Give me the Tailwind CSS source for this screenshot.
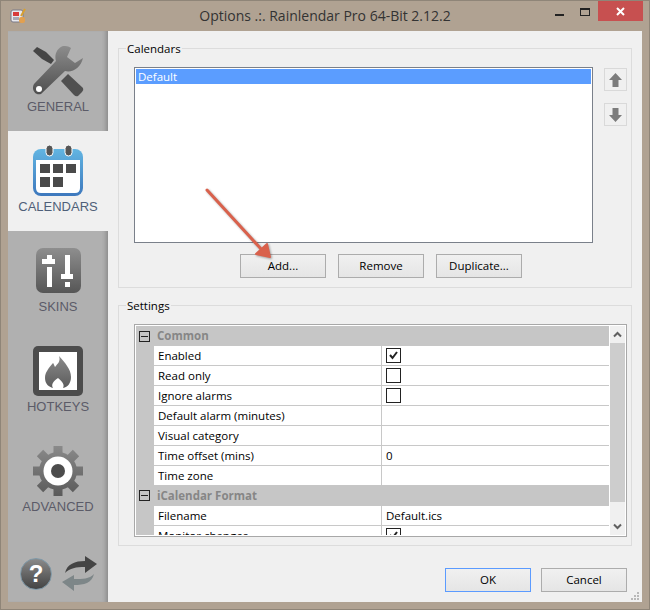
<!DOCTYPE html>
<html>
<head>
    <title>Options .:. Rainlendar Pro 64-Bit 2.12.2</title>
    <script src="https://cdn.jsdelivr.net/npm/@tailwindcss/browser@4"></script>
</head>
<body class="bg-[#b0a292]">
<div class="relative w-[650px] h-[610px] flex flex-col bg-[#b0a292] border border-[#8f8578] font-['Open_Sans',sans-serif] text-[11.5px] text-black overflow-hidden">

    <!-- title bar -->
    <div class="relative h-[30px] shrink-0 flex items-center justify-center text-[#333] text-[14px] pb-[1px]">
        <svg class="absolute left-[9px] top-[6px]" width="17" height="17" viewBox="0 0 17 17">
            <rect x="1" y="3" width="12" height="12" rx="2" fill="#e8e8ee" stroke="#7a7a88"/>
            <rect x="3" y="5" width="6" height="4" fill="#d83a3a"/>
            <rect x="3" y="10" width="6" height="3" fill="#a8a8b4"/>
            <rect x="9" y="10" width="6" height="6" rx="2" fill="#e2a050"/>
            <path d="M11 9 L15 2" stroke="#d8a030" stroke-width="2"/>
        </svg>
        <span>Options .:. Rainlendar Pro 64-Bit 2.12.2</span>
        <div class="absolute right-[85px] top-[13px] w-[9px] h-[2px] bg-[#222]"></div>
        <div class="absolute right-[59px] top-[7px] w-[10px] h-[8px] border border-t-2 border-[#222]"></div>
        <div class="absolute right-[6px] top-0 w-[45px] h-[20px] bg-[#c75050] flex items-center justify-center">
            <svg width="9" height="9" viewBox="0 0 9 9"><path d="M1 1 L8 8 M8 1 L1 8" stroke="#fff" stroke-width="2"/></svg>
        </div>
    </div>

    <div class="flex h-[571px] mx-[7px] bg-[#f0f0f0]">
        <!-- sidebar -->
        <div class="w-[100px] shrink-0 flex flex-col bg-[#b0b0b0] shadow-[inset_-5px_0_4px_-3px_rgba(0,0,0,0.22)] font-['Liberation_Sans',sans-serif] text-[13px] text-[#5b5b68]">
            <div class="h-[100px] flex flex-col items-center pt-[14px]">
                <svg width="52" height="52" viewBox="0 0 52 52">
                    <defs>
                        <linearGradient id="g1" x1="0" y1="0" x2="0" y2="1"><stop offset="0" stop-color="#8c8c8c"/><stop offset="1" stop-color="#4e4e4e"/></linearGradient>
                    </defs>
                    <path d="M1 6 L5 2 L14 7 L22 15 L19 19 L10 14 Z" fill="#454545"/>
                    <path d="M36 29 L51 43 Q52 45 50 47 L46 51 Q44 52 42 50 L29 36 Z" fill="#505050"/>
                    <path d="M31 1 C25 3 22 10 24 16 L2 39 C-1 44 3 51 9 49 L33 26 C41 28 49 22 51 13 L43 18 L35 12 L39 3 C36 1 34 1 31 1 Z" fill="url(#g1)"/>
                    <circle cx="7" cy="44" r="3" fill="#fff"/>
                </svg>
                <span class="mt-[2px] leading-[16px]">GENERAL</span>
            </div>
            <div class="h-[100px] flex flex-col items-center pt-[14px] bg-[#f0f0f0] text-[#4f5f78]">
                <svg width="52" height="52" viewBox="0 0 52 52">
                    <defs>
                        <linearGradient id="g2" x1="0" y1="0" x2="0" y2="1"><stop offset="0" stop-color="#62b5e2"/><stop offset="1" stop-color="#3d78bd"/></linearGradient>
                    </defs>
                    <rect x="1" y="4" width="50" height="47" rx="8" fill="url(#g2)"/>
                    <path d="M4 15 H48 V43 Q48 48 43 48 H9 Q4 48 4 43 Z" fill="#fff"/>
                    <rect x="14" y="0" width="7" height="11" rx="3.5" fill="#555" stroke="#fff"/>
                    <rect x="33" y="0" width="7" height="11" rx="3.5" fill="#555" stroke="#fff"/>
                    <g fill="#4a4a4a">
                        <rect x="8" y="19" width="10" height="9"/><rect x="21" y="19" width="10" height="9"/><rect x="34" y="19" width="10" height="9"/>
                        <rect x="8" y="32" width="10" height="10"/><rect x="21" y="32" width="10" height="10"/>
                    </g>
                </svg>
                <span class="mt-[2px] leading-[16px]">CALENDARS</span>
            </div>
            <div class="h-[100px] flex flex-col items-center pt-[14px]">
                <svg width="52" height="52" viewBox="0 0 52 52">
                    <defs>
                        <linearGradient id="g3" x1="0" y1="0" x2="0" y2="1"><stop offset="0" stop-color="#8e8e8e"/><stop offset="1" stop-color="#565656"/></linearGradient>
                    </defs>
                    <rect x="4" y="3" width="45" height="45" rx="7" fill="url(#g3)"/>
                    <g fill="#fff">
                        <rect x="15" y="10" width="5" height="4"/><rect x="10" y="14" width="13" height="5"/><rect x="15" y="22" width="5" height="20"/>
                        <rect x="33" y="10" width="5" height="19"/><rect x="29" y="29" width="12" height="5"/><rect x="33" y="37" width="5" height="5"/>
                    </g>
                </svg>
                <span class="mt-[2px] leading-[16px]">SKINS</span>
            </div>
            <div class="h-[100px] flex flex-col items-center pt-[14px]">
                <svg width="52" height="52" viewBox="0 0 52 52">
                    <defs>
                        <linearGradient id="g4" x1="0" y1="0" x2="0" y2="1"><stop offset="0" stop-color="#8a8a8a"/><stop offset="1" stop-color="#5c5c5c"/></linearGradient>
                    </defs>
                    <rect x="1" y="1" width="50" height="50" rx="5" fill="#4c4c4c"/>
                    <rect x="7" y="7" width="38" height="38" fill="#fff"/>
                    <path d="M27 11 C29 17 25 19 23 22 C22 20 22 19 21 18 C17 23 13 27 13 33 C13 39 17 42 21 43 C19 40 21 36 26 33 C30 36 33 40 31 43 C36 42 39 38 39 32 C39 24 33 18 27 11 Z" fill="url(#g4)"/>
                </svg>
                <span class="mt-[2px] leading-[16px]">HOTKEYS</span>
            </div>
            <div class="h-[100px] flex flex-col items-center pt-[14px]">
                <svg width="52" height="52" viewBox="0 0 52 52">
                    <defs>
                        <linearGradient id="g5" gradientUnits="userSpaceOnUse" x1="0" y1="1" x2="0" y2="51"><stop offset="0" stop-color="#8a8a8a"/><stop offset="1" stop-color="#5a5a5a"/></linearGradient>
                    </defs>
                    <g stroke="url(#g5)" stroke-width="9">
                        <path d="M26 1 V51 M1 26 H51 M8 8 L44 44 M44 8 L8 44"/>
                    </g>
                    <circle cx="26" cy="26" r="19" fill="url(#g5)"/>
                    <circle cx="26" cy="26" r="14.5" fill="#fff"/>
                    <circle cx="26" cy="26" r="7" fill="#4c4c4c"/>
                </svg>
                <span class="mt-[2px] leading-[16px]">ADVANCED</span>
            </div>
            <div class="mt-auto flex items-center pl-[12px] pb-[10px] gap-[9px]">
                <div class="w-[32px] h-[32px] rounded-full bg-gradient-to-b from-[#8a8a8a] to-[#444] border border-[#7f99a8] flex items-center justify-center text-white font-bold text-[24px] leading-none">?</div>
                <svg width="37" height="37" viewBox="0 0 37 37">
                    <path d="M4 18 C6 9 14 6 24 6 V1 L36 9 L24 18 V12 C15 12 9 13 4 18 Z" fill="#444"/>
                    <path d="M33 19 C31 28 23 30 13 30 V36 L1 27 L13 20 V24 C22 24 28 24 33 19 Z" fill="#7d8688"/>
                </svg>
            </div>
        </div>

        <!-- main panel -->
        <div class="flex-1 px-[10px] flex flex-col">
            <fieldset class="mt-[9px] h-[248px] border border-[#dcdcdc] pl-[15px] pr-[4px] pt-[11px]">
                <legend class="-ml-[8px] px-[1px] h-[16px] pt-[1px] leading-[16px] text-[11.5px]">Calendars</legend>
                <div class="flex gap-[11px]">
                    <div class="w-[459px] h-[176px] bg-white border border-[#7a808a] p-[1px]">
                        <div class="h-[15px] leading-[15px] bg-[#5b9dff] text-white pl-[2px]">Default</div>
                    </div>
                    <div class="flex flex-col gap-[12px] pt-[1px]">
                        <div class="w-[23px] h-[23px] border border-[#d9d9d9] flex items-center justify-center">
                            <svg width="15" height="16" viewBox="0 0 15 16"><path d="M7.5 1 L14 8 H10.5 V15 H4.5 V8 H1 Z" fill="#7c7c7c"/></svg>
                        </div>
                        <div class="w-[23px] h-[23px] border border-[#d9d9d9] flex items-center justify-center">
                            <svg width="15" height="16" viewBox="0 0 15 16"><path d="M7.5 15 L14 8 H10.5 V1 H4.5 V8 H1 Z" fill="#7c7c7c"/></svg>
                        </div>
                    </div>
                </div>
                <div class="flex gap-[12px] mt-[11px] pl-[106px]">
                    <button class="w-[86px] h-[24px] border border-[#acacac] bg-gradient-to-b from-[#f0f0f0] to-[#e5e5e5]">Add...</button>
                    <button class="w-[86px] h-[24px] border border-[#acacac] bg-gradient-to-b from-[#f0f0f0] to-[#e5e5e5]">Remove</button>
                    <button class="w-[86px] h-[24px] border border-[#acacac] bg-gradient-to-b from-[#f0f0f0] to-[#e5e5e5]">Duplicate...</button>
                </div>
            </fieldset>

            <fieldset class="mt-[9px] h-[249px] border border-[#dcdcdc] pl-[15px] pr-[4px] pt-[11px]">
                <legend class="-ml-[8px] px-[1px] h-[16px] pt-[1px] leading-[16px] text-[11.5px]">Settings</legend>
                <div class="w-[493px] h-[213px] bg-white border border-[#a8a8a8] p-[1px] flex overflow-hidden">
                    <div class="w-[473px] h-[209px] overflow-hidden">
                        <div class="h-[20px] bg-[#c6c6c6] flex items-center">
                            <div class="w-[11px] h-[11px] ml-[3px] border border-[#222] flex items-center justify-center"><div class="w-[7px] h-[1px] bg-[#222]"></div></div>
                            <span class="ml-[7px] font-bold text-[#868686]">Common</span>
                        </div>
                        <div class="grid grid-cols-[18px_228px_1fr] auto-rows-[20px]">
                            <div class="bg-[#c6c6c6]"></div><div class="border-b border-r border-[#c8c8c8] pl-[4px] leading-[19px]">Enabled</div>
                            <div class="border-b border-[#c8c8c8] pl-[4px] pt-[2px]"><div class="w-[15px] h-[15px] border border-[#222] flex items-center justify-center"><svg width="11" height="11" viewBox="0 0 11 11"><path d="M2 5 L4.5 8 L9 2" fill="none" stroke="#222" stroke-width="2"/></svg></div></div>
                            <div class="bg-[#c6c6c6]"></div><div class="border-b border-r border-[#c8c8c8] pl-[4px] leading-[19px]">Read only</div>
                            <div class="border-b border-[#c8c8c8] pl-[4px] pt-[2px]"><div class="w-[15px] h-[15px] border border-[#222]"></div></div>
                            <div class="bg-[#c6c6c6]"></div><div class="border-b border-r border-[#c8c8c8] pl-[4px] leading-[19px]">Ignore alarms</div>
                            <div class="border-b border-[#c8c8c8] pl-[4px] pt-[2px]"><div class="w-[15px] h-[15px] border border-[#222]"></div></div>
                            <div class="bg-[#c6c6c6]"></div><div class="border-b border-r border-[#c8c8c8] pl-[4px] leading-[19px]">Default alarm (minutes)</div>
                            <div class="border-b border-[#c8c8c8]"></div>
                            <div class="bg-[#c6c6c6]"></div><div class="border-b border-r border-[#c8c8c8] pl-[4px] leading-[19px]">Visual category</div>
                            <div class="border-b border-[#c8c8c8]"></div>
                            <div class="bg-[#c6c6c6]"></div><div class="border-b border-r border-[#c8c8c8] pl-[4px] leading-[19px]">Time offset (mins)</div>
                            <div class="border-b border-[#c8c8c8] pl-[4px] leading-[19px]">0</div>
                            <div class="bg-[#c6c6c6]"></div><div class="border-r border-[#c8c8c8] pl-[4px] leading-[19px]">Time zone</div>
                            <div></div>
                        </div>
                        <div class="h-[21px] -mt-[1px] relative bg-[#c6c6c6] flex items-center">
                            <div class="w-[11px] h-[11px] ml-[3px] border border-[#222] flex items-center justify-center"><div class="w-[7px] h-[1px] bg-[#222]"></div></div>
                            <span class="ml-[7px] font-bold text-[#868686]">iCalendar Format</span>
                        </div>
                        <div class="grid grid-cols-[18px_228px_1fr] auto-rows-[20px]">
                            <div class="bg-[#c6c6c6]"></div><div class="border-b border-r border-[#c8c8c8] pl-[4px] leading-[19px]">Filename</div>
                            <div class="border-b border-[#c8c8c8] pl-[4px] leading-[19px]">Default.ics</div>
                            <div class="bg-[#c6c6c6]"></div><div class="border-r border-[#c8c8c8] pl-[4px] leading-[19px]">Monitor changes</div>
                            <div class="pl-[4px] pt-[2px]"><div class="w-[15px] h-[15px] border border-[#222] flex items-center justify-center"><svg width="11" height="11" viewBox="0 0 11 11"><path d="M2 5 L4.5 8 L9 2" fill="none" stroke="#222" stroke-width="2"/></svg></div></div>
                        </div>
                    </div>
                    <!-- scrollbar -->
                    <div class="ml-[1px] w-[15px] h-[209px] bg-[#f0f0f0] flex flex-col items-center">
                        <div class="h-[17px] flex items-center justify-center">
                            <svg width="9" height="7" viewBox="0 0 9 7"><path d="M1 5.5 L4.5 2 L8 5.5" fill="none" stroke="#606060" stroke-width="2"/></svg>
                        </div>
                        <div class="w-full h-[159px] bg-[#cdcdcd]"></div>
                        <div class="mt-auto h-[17px] flex items-center justify-center">
                            <svg width="9" height="7" viewBox="0 0 9 7"><path d="M1 1.5 L4.5 5 L8 1.5" fill="none" stroke="#606060" stroke-width="2"/></svg>
                        </div>
                    </div>
                </div>
            </fieldset>

            <div class="flex justify-end gap-[10px] mt-[22px] pr-[5px]">
                <button class="w-[86px] h-[24px] border border-[#5b9bff] bg-gradient-to-b from-[#f0f0f0] to-[#e5e5e5]">OK</button>
                <button class="w-[86px] h-[24px] border border-[#acacac] bg-gradient-to-b from-[#f0f0f0] to-[#e5e5e5]">Cancel</button>
            </div>
        </div>
    </div>

    <!-- resize grip -->
    <svg class="absolute left-[630px] top-[591px]" width="10" height="10" viewBox="0 0 10 10" fill="#b8b8b8">
        <rect x="6" y="0" width="2" height="2"/><rect x="3" y="3" width="2" height="2"/><rect x="6" y="3" width="2" height="2"/>
        <rect x="0" y="6" width="2" height="2"/><rect x="3" y="6" width="2" height="2"/><rect x="6" y="6" width="2" height="2"/>
    </svg>

    <!-- annotation arrow -->
    <svg class="absolute left-[199px] top-[182px] drop-shadow-[1px_1px_1px_rgba(0,0,0,0.35)]" width="80" height="84" viewBox="0 0 80 84">
        <path d="M7 7 L62 67" stroke="#d9614c" stroke-width="3" stroke-linecap="round"/>
        <path d="M70 74 L56 71 L67 61 Z" fill="#d9614c" stroke="#d9614c" stroke-width="2" stroke-linejoin="round"/>
    </svg>
</div>
</body>
</html>
